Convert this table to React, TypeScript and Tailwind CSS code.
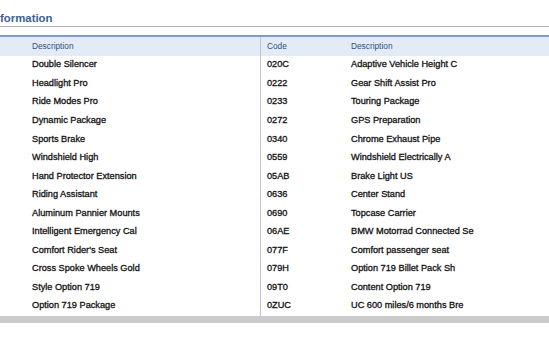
import React from "react";

const rows: [string, string, string][] = [
  ["Double Silencer", "020C", "Adaptive Vehicle Height C"],
  ["Headlight Pro", "0222", "Gear Shift Assist Pro"],
  ["Ride Modes Pro", "0233", "Touring Package"],
  ["Dynamic Package", "0272", "GPS Preparation"],
  ["Sports Brake", "0340", "Chrome Exhaust Pipe"],
  ["Windshield High", "0559", "Windshield Electrically A"],
  ["Hand Protector Extension", "05AB", "Brake Light US"],
  ["Riding Assistant", "0636", "Center Stand"],
  ["Aluminum Pannier Mounts", "0690", "Topcase Carrier"],
  ["Intelligent Emergency Cal", "06AE", "BMW Motorrad Connected Se"],
  ["Comfort Rider's Seat", "077F", "Comfort passenger seat"],
  ["Cross Spoke Wheels Gold", "079H", "Option 719 Billet Pack Sh"],
  ["Style Option 719", "09T0", "Content Option 719"],
  ["Option 719 Package", "0ZUC", "UC 600 miles/6 months Bre"],
];

export default function App() {
  return (
    <div
      className="w-[549px] h-[344px] bg-white overflow-hidden"
      style={{ fontFamily: '"Liberation Sans", Arial, sans-serif' }}
    >
      <div className="h-[27px] flex items-end pb-[2px] border-b border-[#b4b4b4]">
        <span className="text-[11.4px] font-bold text-[#3d5f94] leading-none">formation</span>
      </div>
      <div className="mt-[8px] border-t-2 border-[#7f9cc8]">
        <div className="flex h-[19px] bg-[#e3ebf6] items-center text-[8.3px] text-[#2f4f80]">
          <div className="w-[261px] pl-[32px] border-r border-[#c4c4c4] h-full flex items-center">Description</div>
          <div className="w-[83px] pl-[6px]">Code</div>
          <div className="pl-[7px]">Description</div>
        </div>
        {rows.map((r) => (
          <div key={r[1]} className="flex h-[18.55px] items-center text-[9.2px] text-[#111111] [-webkit-text-stroke:0.3px_#111111]">
            <div className="w-[261px] pl-[32px] border-r border-[#c4c4c4] h-full flex items-center whitespace-nowrap">{r[0]}</div>
            <div className="w-[83px] pl-[6px] whitespace-nowrap">{r[1]}</div>
            <div className="pl-[7px] whitespace-nowrap">{r[2]}</div>
          </div>
        ))}
        <div className="h-[7px] bg-[#cbcbcb]" />
      </div>
    </div>
  );
}
